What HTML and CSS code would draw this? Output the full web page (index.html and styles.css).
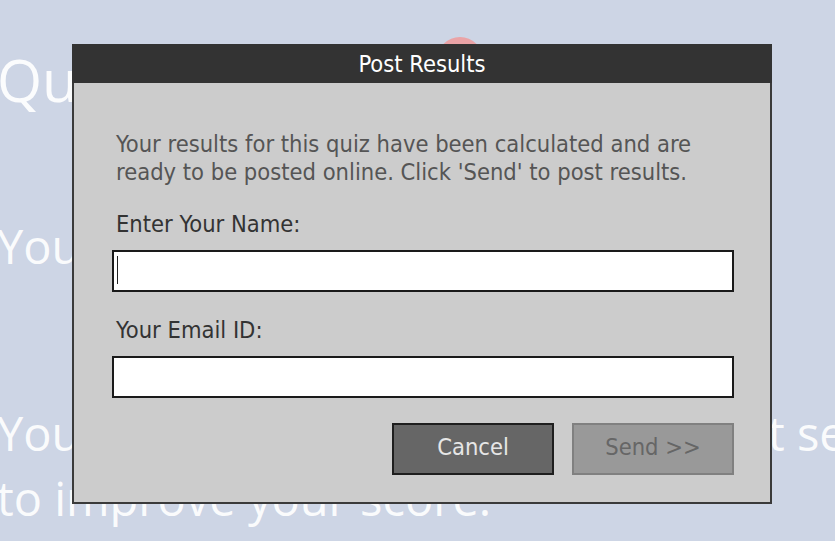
FILE: index.html
```html
<!DOCTYPE html>
<html>
<head>
<meta charset="utf-8">
<link rel="stylesheet" href="styles.css">
</head>
<body>
<div class="page">
  <div class="badge"></div>
  <h1 class="quiz-title">Quiz Results</h1>
  <p class="score">Your Score: 40%</p>
  <p class="message"><span class="line">You may check the test and attempt several times</span> to improve your score.</p>
</div>

<div class="dialog">
  <div class="dialog-title">Post Results</div>
  <div class="dialog-body">
    <p class="intro">Your results for this quiz have been calculated and are<br>ready to be posted online. Click 'Send' to post results.</p>
    <label class="field-label">Enter Your Name:</label>
    <div class="field"><span class="caret"></span></div>
    <label class="field-label second">Your Email ID:</label>
    <div class="field"></div>
    <div class="actions">
      <div class="btn btn-cancel">Cancel</div>
      <div class="btn btn-send">Send &gt;&gt;</div>
    </div>
  </div>
</div>
</body>
</html>
```
FILE: styles.css
```css
html, body {
  margin: 0;
  padding: 0;
}
body {
  width: 835px;
  height: 541px;
  overflow: hidden;
  background: #cdd5e5;
  position: relative;
}
.page {
  font-family: "Open Sans", sans-serif;
  color: rgba(255, 255, 255, 0.92);
  padding-top: 40px;
  position: relative;
}
.badge {
  position: absolute;
  left: 437px;
  top: 37px;
  width: 46px;
  height: 46px;
  border-radius: 50%;
  background: #eaa3a6;
}
.quiz-title {
  margin: 0 0 0 -3px;
  font-size: 58px;
  font-weight: 400;
  line-height: 80px;
}
.score {
  margin: 94px 0 0 -3px;
  font-size: 47px;
  line-height: 64px;
}
.message {
  margin: 123px 0 0 -3px;
  font-size: 47px;
  line-height: 65px;
}
.message .line {
  display: block;
  white-space: nowrap;
}

.dialog {
  position: absolute;
  left: 72px;
  top: 44px;
  width: 700px;
  height: 460px;
  box-sizing: border-box;
  border: 2px solid #3a3a3a;
  border-top: none;
  background: #cccccc;
  display: flex;
  flex-direction: column;
  font-family: "DejaVu Sans Condensed", "DejaVu Sans", sans-serif;
  font-size: 23.5px;
}
.dialog-title {
  background: #333333;
  color: #ffffff;
  height: 39px;
  margin: 0 -2px;
  display: flex;
  align-items: center;
  justify-content: center;
  padding-top: 1px;
  box-sizing: border-box;
}
.dialog-body {
  padding: 47px 36px 0 38px;
  display: flex;
  flex-direction: column;
}
.intro {
  margin: 0 0 0 4px;
  line-height: 28px;
  color: #555555;
}
.field-label {
  display: block;
  margin: 24px 0 0 4px;
  line-height: 28px;
  color: #333333;
}
.field-label.second {
  margin-top: 24px;
}
.field {
  margin-top: 12px;
  height: 42px;
  box-sizing: border-box;
  border: 2px solid #1a1a1a;
  background: #ffffff;
  position: relative;
}
.caret {
  position: absolute;
  left: 3px;
  top: 4px;
  width: 1px;
  height: 28px;
  background: #222;
}
.actions {
  display: flex;
  justify-content: flex-end;
  gap: 18px;
  margin-top: 25px;
}
.btn {
  width: 162px;
  height: 52px;
  box-sizing: border-box;
  display: flex;
  align-items: center;
  justify-content: center;
  padding-bottom: 5px;
}
.btn-cancel {
  background: #666666;
  border: 2px solid #1e1e1e;
  color: #e6e6e6;
}
.btn-send {
  background: #999999;
  border: 2px solid #808080;
  color: #666666;
}
```
